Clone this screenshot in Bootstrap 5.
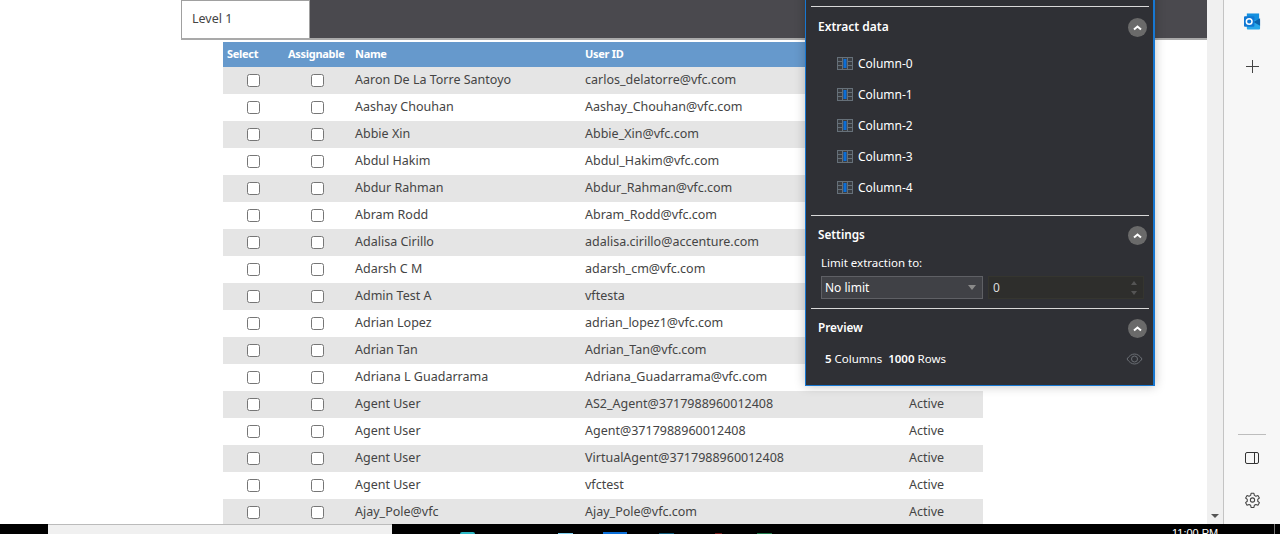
<!DOCTYPE html>
<html lang="en">
<head>
    <meta charset="UTF-8">
    <meta name="viewport" content="width=device-width, initial-scale=1.0">
    <title>Users</title>
    <link rel="stylesheet" href="https://cdn.jsdelivr.net/npm/bootstrap@5.3.3/dist/css/bootstrap.min.css">
    <style>
        html, body { height: 534px; overflow: hidden; }
        body { font-family: "Noto Sans", "Liberation Sans", sans-serif; background: #fff; color: #444; }
        .screen-main { height: 524px; }
        .page-area { width: 1207px; height: 524px; overflow: hidden; position: relative; }

        /* tab strip */
        .tab-strip { height: 40px; margin-left: 181px; border-bottom: 2px solid #a9a9a9; background: #4a494e; }
        .tab-level { width: 129px; height: 38px; background: #fff; border: 1px solid #a0a0a0; border-bottom: 0; font-size: 12.500px; padding: 9px 0 0 10px; color: #444; }

        /* users table */
        .users-wrap { margin: 2px 0 0 223px; width: 760px; }
        .users-table { width: 760px; table-layout: fixed; border-collapse: collapse; font-size: 12.500px; margin: 0; }
        .users-table th { background: #6699cc; color: #fff; height: 25px; padding: 0 5px; font-size: 11px; letter-spacing: -.3px; font-weight: 700; white-space: nowrap; }
        .users-table th:nth-child(-n+2) { padding: 0 4px; }
        .users-table td { height: 27px; padding: 0 5px; white-space: nowrap; overflow: hidden; color: #444; }
        .users-table tbody tr:nth-child(odd) td { background: #e5e5e5; }
        .users-table .chk { text-align: center; padding: 0; }
        .users-table input { width: 13px; height: 13px; display: block; margin: 0 auto; appearance: none; background: #fff; border: 1px solid #767676; border-radius: 2.500px; }

        /* extract panel */
        .extract-panel { position: absolute; left: 805px; top: -10px; width: 350px; height: 396px; background: #2f3035; border: 1px solid #1777d1; border-right-width: 2px; border-top: 0; box-shadow: 0 0 10px rgba(0,0,0,.25); color: #fff; font-size: 12px; padding: 16px 4px 0 5px; }
        .panel-line { height: 1px; background: #d8d8d8; }
        .panel-head { display: flex; justify-content: space-between; align-items: center; padding: 0 2px 0 7px; font-weight: 600; height: 38px; }
        .head-extract { height: 40px; }
        .head-settings, .head-preview { font-size: 11.750px; }
        .round-toggle { width: 19px; height: 19px; border-radius: 50%; background: #6a6a6a; display: flex; align-items: center; justify-content: center; }
        .column-list { margin: 1px 0 12px; }
        .column-item { display: flex; align-items: center; gap: 5px; height: 31px; padding-left: 26px; }
        .limit-label { font-size: 11.500px; height: 22px; padding-left: 10px; line-height: 18px; }
        .limit-row { padding-left: 10px; margin-bottom: 9px; }
        .limit-select { width: 162px; height: 23px; background: #404146; border: 1px solid #5f6065; padding: 0 3px; display: flex; align-items: center; justify-content: space-between; }
        .limit-arrow { width: 0; height: 0; border-left: 4px solid transparent; border-right: 4px solid transparent; border-top: 5px solid #8a8a8a; margin-right: 3px; }
        .limit-input { width: 156px; height: 23px; margin-left: 5px; background: #2e2e2c; border: 1px solid #35352f; padding: 0 6px 0 4px; display: flex; align-items: center; justify-content: space-between; color: #ddd; }
        .spin-col { display: flex; flex-direction: column; gap: 6px; }
        .spin-up { width: 0; height: 0; border-left: 3.500px solid transparent; border-right: 3.500px solid transparent; border-bottom: 4px solid #555; }
        .spin-down { width: 0; height: 0; border-left: 3.500px solid transparent; border-right: 3.500px solid transparent; border-top: 4px solid #555; }
        .preview-row { height: 24px; padding: 0 6px 0 14px; font-size: 11.500px; }

        /* scrollbar and side rail */
        .fake-scroll { width: 16px; height: 524px; background: #f0f0f0; position: relative; }
        .scroll-arrow { position: absolute; left: 4px; bottom: 6px; width: 0; height: 0; border-left: 4px solid transparent; border-right: 4px solid transparent; border-top: 4px solid #555; }
        .side-rail { width: 57px; height: 524px; background: #f7f7f7; border-left: 1px solid #c4c4c4; padding: 13px 0 15px; }
        .rail-plus { margin-top: 30px; }
        .rail-sep { width: 28px; height: 1px; background: #bdbdbd; margin-top: auto; }
        .rail-panel { margin-top: 17px; }
        .rail-gear { margin-top: 27px; }

        /* windows taskbar */
        .task-bar { height: 10px; background: #000; overflow: hidden; }
        .task-search { margin-left: 48px; width: 344px; height: 10px; background: #f0f0f0; border-top: 1px solid #bbb; }
        .task-icon { width: 15px; height: 2px; }
        .icon-edge { margin-left: 68px; background: #2bb7c4; border-radius: 7px 7px 0 0; }
        .icon-files { margin-left: 83px; height: 1px; background: #7fd0f0; }
        .icon-store { margin-left: 30px; width: 24px; background: #0a6ed8; }
        .icon-mail { margin-left: 32px; height: 1px; background: #0f5a7a; }
        .icon-red { margin-left: 41px; width: 7px; height: 1px; background: #7a1c1c; }
        .icon-green { margin-left: 35px; height: 1px; background: #1e7a4a; }
        .task-clock { margin-left: 400px; padding-top: 3px; color: #fff; font-family: "Liberation Sans", sans-serif; font-size: 11px; line-height: 12px; white-space: nowrap; }
        .task-edge { margin-left: 56px; width: 1px; height: 10px; background: #777; }
    </style>
</head>
<body>
<div class="screen-main d-flex">
    <div class="page-area">
        <div class="tab-strip"><div class="tab-level">Level 1</div></div>
        <div class="users-wrap">
            <table class="users-table">
                <colgroup><col style="width:61px"><col style="width:66px"><col style="width:230px"><col style="width:324px"><col style="width:79px"></colgroup>
                <thead><tr><th>Select</th><th>Assignable</th><th>Name</th><th>User ID</th><th></th></tr></thead>
                <tbody id="userRows"></tbody>
            </table>
        </div>

        <div class="extract-panel">
            <div class="panel-line"></div>
            <div class="panel-head head-extract"><span>Extract data</span><span class="round-toggle"><svg width="11" height="7" viewBox="0 0 11 7"><path d="M2 5.500l3.500-3 3.500 3" fill="none" stroke="#fff" stroke-width="2"/></svg></span></div>
            <div id="columnList" class="column-list"></div>
            <div class="panel-line"></div>
            <div class="panel-head head-settings"><span>Settings</span><span class="round-toggle"><svg width="11" height="7" viewBox="0 0 11 7"><path d="M2 5.500l3.500-3 3.500 3" fill="none" stroke="#fff" stroke-width="2"/></svg></span></div>
            <div class="limit-label">Limit extraction to:</div>
            <div class="d-flex limit-row">
                <div class="limit-select"><span>No limit</span><span class="limit-arrow"></span></div>
                <div class="limit-input"><span>0</span><span class="spin-col"><span class="spin-up"></span><span class="spin-down"></span></span></div>
            </div>
            <div class="panel-line"></div>
            <div class="panel-head head-preview"><span>Preview</span><span class="round-toggle"><svg width="11" height="7" viewBox="0 0 11 7"><path d="M2 5.500l3.500-3 3.500 3" fill="none" stroke="#fff" stroke-width="2"/></svg></span></div>
            <div class="d-flex justify-content-between align-items-center preview-row">
                <span><b class="fw-semibold">5</b> Columns &nbsp;<b class="fw-semibold">1000</b> Rows</span>
                <svg width="17" height="12" viewBox="0 0 17 12" fill="none" stroke="#6b6f75"><path d="M1 6c2-3 4.500-5 7.500-5s5.500 2 7.500 5c-2 3-4.500 5-7.500 5S3 9 1 6z"/><circle cx="8.500" cy="6" r="3"/></svg>
            </div>
        </div>
    </div>

    <div class="fake-scroll"><span class="scroll-arrow"></span></div>

    <div class="side-rail d-flex flex-column align-items-center">
        <svg class="rail-outlook" width="17" height="17" viewBox="0 0 18 17">
            <rect x="3" y="0" width="13" height="9" fill="#1490df"/>
            <path d="M3 7h14v9a1 1 0 0 1-1 1H4a1 1 0 0 1-1-1z" fill="#28a8ea"/>
            <path d="M10 9l7-4v8z" fill="#0a64ad"/>
            <rect x="0" y="3" width="11" height="11" rx="1" fill="#0f78d4"/>
            <circle cx="5.500" cy="8.500" r="3" fill="none" stroke="#fff" stroke-width="1.600"/>
        </svg>
        <svg class="rail-plus" width="13" height="13" viewBox="0 0 13 13"><path d="M6.500 0v13M0 6.500h13" stroke="#444" stroke-width="1"/></svg>
        <div class="rail-sep"></div>
        <svg class="rail-panel" width="14" height="12" viewBox="0 0 14 12" fill="none" stroke="#333"><rect x=".5" y=".5" width="13" height="11" rx="1.500"/><path d="M9.500 .5v11"/></svg>
        <svg class="rail-gear" width="17" height="18" viewBox="0 0 24 24" fill="none" stroke="#444" stroke-width="1.500"><circle cx="12" cy="12" r="3"/><path d="M10 2.500h4l.6 3 2.200 1.200 2.900-1 2 3.500-2.300 2 0 2.600 2.300 2-2 3.500-2.900-1-2.200 1.200-.6 3h-4l-.6-3-2.200-1.200-2.900 1-2-3.500 2.300-2 0-2.600-2.300-2 2-3.500 2.900 1 2.200-1.200z" stroke-linejoin="round"/></svg>
    </div>
</div>

<div class="task-bar d-flex align-items-end">
    <div class="task-search"></div>
    <div class="task-icon icon-edge"></div>
    <div class="task-icon icon-files"></div>
    <div class="task-icon icon-store"></div>
    <div class="task-icon icon-mail"></div>
    <div class="task-icon icon-red"></div>
    <div class="task-icon icon-green"></div>
    <div class="task-clock align-self-start">11:00 PM</div>
    <div class="task-edge"></div>
</div>

<script>
    var users = [
        ["Aaron De La Torre Santoyo", "carlos_delatorre@vfc.com"],
        ["Aashay Chouhan", "Aashay_Chouhan@vfc.com"],
        ["Abbie Xin", "Abbie_Xin@vfc.com"],
        ["Abdul Hakim", "Abdul_Hakim@vfc.com"],
        ["Abdur Rahman", "Abdur_Rahman@vfc.com"],
        ["Abram Rodd", "Abram_Rodd@vfc.com"],
        ["Adalisa Cirillo", "adalisa.cirillo@accenture.com"],
        ["Adarsh C M", "adarsh_cm@vfc.com"],
        ["Admin Test A", "vftesta"],
        ["Adrian Lopez", "adrian_lopez1@vfc.com"],
        ["Adrian Tan", "Adrian_Tan@vfc.com"],
        ["Adriana L Guadarrama", "Adriana_Guadarrama@vfc.com"],
        ["Agent User", "AS2_Agent@3717988960012408", "Active"],
        ["Agent User", "Agent@3717988960012408", "Active"],
        ["Agent User", "VirtualAgent@3717988960012408", "Active"],
        ["Agent User", "vfctest", "Active"],
        ["Ajay_Pole@vfc", "Ajay_Pole@vfc.com", "Active"]
    ];
    var rows = "";
    users.forEach(function (u) {
        rows += '<tr><td class="chk"><input type="checkbox"></td><td class="chk"><input type="checkbox"></td><td>' + u[0] + '</td><td>' + u[1] + '</td><td>' + (u[2] || "") + '</td></tr>';
    });
    document.getElementById("userRows").innerHTML = rows;

    var list = "";
    for (var i = 0; i < 5; i++) {
        list += '<div class="column-item"><svg width="16" height="13" viewBox="0 0 16 13"><rect x=".5" y=".5" width="15" height="12" fill="#3a3d42" stroke="#667079"/><path d="M5.500 1v11M10.500 1v11M1 4.500h4M1 8.500h4M11 4.500h4M11 8.500h4" stroke="#667079"/><rect x="6.500" y="2" width="3" height="9" fill="#0a6ed8"/></svg><span>Column-' + i + '</span></div>';
    }
    document.getElementById("columnList").innerHTML = list;
</script>
</body>
</html>
